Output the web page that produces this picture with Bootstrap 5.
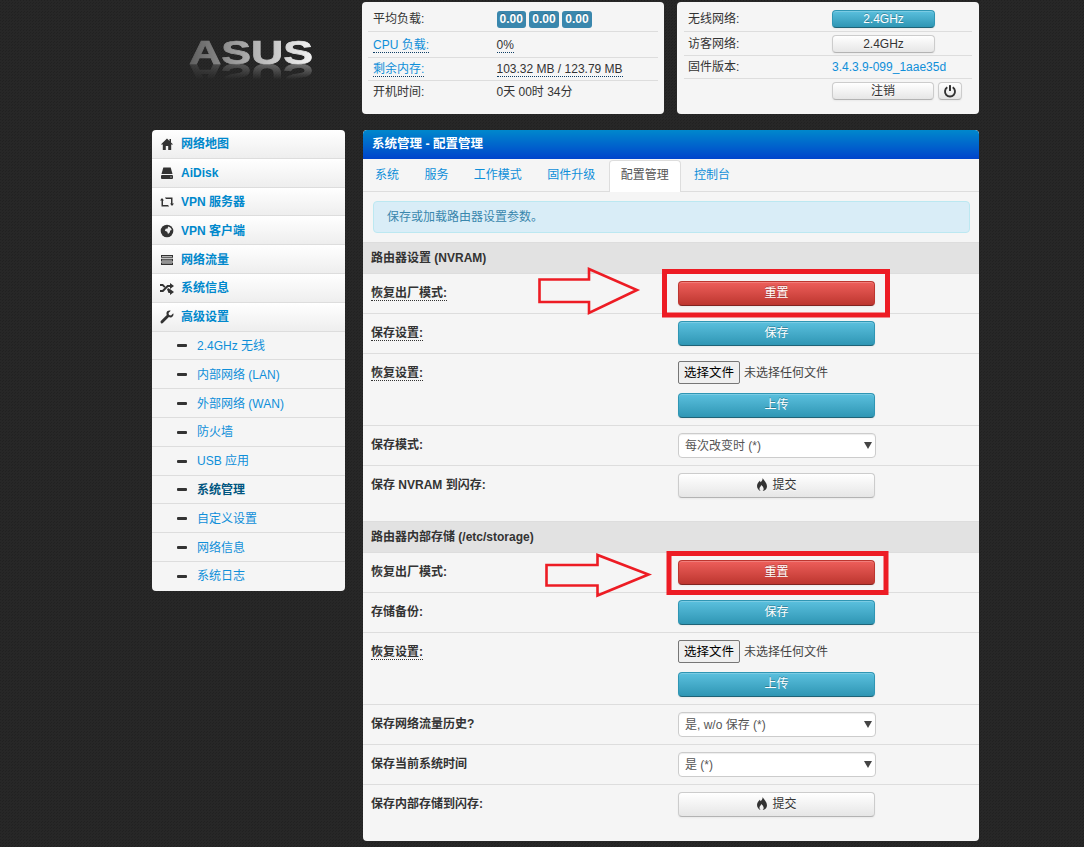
<!DOCTYPE html>
<html lang="zh">
<head>
<meta charset="utf-8">
<title>系统管理 - 配置管理</title>
<link href="https://cdn.jsdelivr.net/npm/bootstrap@5.3.0/dist/css/bootstrap.min.css" rel="stylesheet">
<style>
html,body{height:847px;overflow:hidden}
body{font:12px/18px "Liberation Sans","Noto Sans CJK SC",sans-serif;color:#333;
  background-color:#272727;
  background-image:linear-gradient(45deg,#212121 25%,transparent 25%,transparent 75%,#212121 75%);
  background-size:3px 3px}
a{color:#0f8fd9;text-decoration:none}
.ico{width:14px;height:14px;fill:#333;flex:none}
.shell{width:827px;margin:0 0 0 152px;padding-top:2px}
.brand{width:210px;height:112px;padding:38px 0 0 37px}
.brand svg{display:block;overflow:visible;-webkit-box-reflect:below 0 linear-gradient(transparent 35%,rgba(255,255,255,.4))}
.brand text{font:bold 33px "Liberation Sans",sans-serif}
.panel{background:#f5f5f5;border-radius:4px}
.stat{width:302px;height:112px;padding:5px 6px 0}
.stat-b{margin-left:13px;padding:5px 7px 0}
.srow{border-bottom:1px solid #ddd;display:flex;align-items:center;padding-left:5px}
.srow:last-child{border-bottom:0}
.stat-b .srow{padding-left:4px}
.h22{height:22px}.h23{height:23px}.h24{height:24px}.h25{height:25px}.h26{height:26px}
.btn-strip{align-items:flex-start;padding-top:3px}
.slabel{width:123.5px;flex:none}
.stat-b .slabel{width:144px}
.tip{border-bottom:1px dotted #0f3f66}
.pill{display:inline-block;background:#3a87ad;color:#fff;font-weight:700;font-size:12px;line-height:15px;padding:1px 3px;border-radius:3px;margin-right:3.5px;text-shadow:0 -1px 0 rgba(0,0,0,.25)}
.btnx{display:block;border-radius:4px;padding:0;font-size:12px;line-height:16px;color:#333;border:1px solid #ccc;border-bottom-color:#b3b3b3;background:linear-gradient(#fff,#e6e6e6);text-shadow:0 1px 1px rgba(255,255,255,.75);box-shadow:inset 0 1px 0 rgba(255,255,255,.2),0 1px 2px rgba(0,0,0,.05)}
.btnx:hover{color:#333}
.btn-go{color:#fff;background:linear-gradient(#5bc0de,#2f96b4);border-color:#2f96b4 #2f96b4 #1f6377;text-shadow:0 -1px 0 rgba(0,0,0,.25)}
.btn-stop{color:#fff;background:linear-gradient(#ee5f5b,#bd362f);border-color:#bd362f #bd362f #802420;text-shadow:0 -1px 0 rgba(0,0,0,.25)}
.btn-go:hover,.btn-stop:hover{color:#fff}
.w103{width:103px;height:18px}
.w102{width:102px;height:18px}
.w24{width:24px;height:18px}
.w197{width:197px;height:25px;line-height:23px}
.cols{margin-top:16px}
.side{width:193px;flex:none;border-radius:4px;overflow:hidden;align-self:flex-start}
.side .list-group-item{height:28.8px;border:0;border-bottom:1px solid #ddd;border-radius:0;background:linear-gradient(#fff,#eee);padding:1px 0 0 8px;display:flex;align-items:center;gap:7px;font-weight:700;color:#0088cc;font-size:12px}
.side .list-group-item:last-child{border-bottom:0;padding-top:0}
.side .sub{background:#f5f5f5;padding-left:25px;gap:10px;font-weight:400;color:#0f8fd9}
.side .sub.current{font-weight:700;color:#005580}
.dash{width:10px;height:3px;background:#333;border-radius:1px;flex:none}
.main{width:616px;margin-left:18px;height:711px;position:relative;overflow:hidden}
.mhead{height:29px;background:linear-gradient(#0088cc,#0044cc);color:#fff;font-weight:700;font-size:12.5px;line-height:29px;padding-left:9px;border-radius:4px 4px 0 0}
.tabsx{height:33px;padding-top:1px;border-bottom:1px solid #ddd;flex-wrap:nowrap}
.tabsx .nav-link{height:32px;padding:5px 11px;font-size:12px;line-height:18px;margin-right:1.4px;color:#0f8fd9;border:1px solid transparent;border-bottom:0;border-radius:4px 4px 0 0;margin-bottom:0}
.tabsx .nav-link.active{background:#fff;color:#555;border-color:#ddd;height:32px}
.notice{margin:9px 9px 9px 10px;height:32px;padding:6px 13px;border-radius:4px;background:#d9edf7;border:1px solid #bce8f1;color:#3a87ad;font-size:12px;line-height:18px}
.shead{height:32px;background:#e2e2e2;border-top:1px solid #ddd;border-bottom:1px solid #ddd;padding:6px 8px;font-weight:700}
.frow{display:flex;padding:7px 8px;border-bottom:1px solid #ddd}
.frow.plain{border-bottom:0;padding-bottom:23px}
.frow.lastp{border-bottom:0}
.flabel{width:307px;flex:none;font-weight:700;padding-top:3px}
.dot{border-bottom:1px dotted #333}
.filebtn{height:23px;width:62px;padding:0;border:1px solid #767676;border-radius:2px;background:#efefef;color:#000;font:12.5px/20px "Liberation Sans","Noto Sans CJK SC",sans-serif}
.filetxt{margin-left:4px;color:#444}
.gap9{margin-top:9px}
.pick{width:198px;height:25px;padding:2px 20px 2px 6px;font-size:12px;line-height:20px;color:#555;border:1px solid #ccc;border-radius:4px;background-color:#fff;box-shadow:inset 0 1px 1px rgba(0,0,0,.075);background-position:right 3px top 8px;background-size:8px 7px;
  background-image:url("data:image/svg+xml,%3csvg xmlns='http://www.w3.org/2000/svg' viewBox='0 0 8 7'%3e%3cpath fill='%23444' d='M0 0h8L4 7z'/%3e%3c/svg%3e")}
.mark-lay{position:absolute;left:0;top:0;width:616px;height:711px;pointer-events:none}
.fire{width:12px;height:13px;margin-right:4px;vertical-align:-2px;fill:#333}
</style>
</head>
<body>
<div class="shell">
  <div class="d-flex">
    <div class="brand">
      <svg width="124" height="24" viewBox="0 0 124 24" role="img" aria-label="ASUS">
        <defs><linearGradient id="lg" x1="0" x2="1" y1="0" y2="0"><stop offset="0" stop-color="#5e5e5e"/><stop offset=".45" stop-color="#a8a8a8"/><stop offset="1" stop-color="#f4f4f4"/></linearGradient></defs>
        <text x="0" y="24" textLength="124" lengthAdjust="spacingAndGlyphs" fill="url(#lg)" stroke="url(#lg)" stroke-width=".7">ASUS</text>
      </svg>
    </div>
    <div class="panel stat">
      <div class="srow h25"><div class="slabel">平均负载:</div><div class="d-flex"><span class="pill">0.00</span><span class="pill">0.00</span><span class="pill">0.00</span></div></div>
      <div class="srow h26"><div class="slabel"><a href="#" class="tip">CPU 负载:</a></div><div><span class="tip">0%</span></div></div>
      <div class="srow h23"><div class="slabel"><a href="#" class="tip">剩余内存:</a></div><div><span class="tip">103.32 MB / 123.79 MB</span></div></div>
      <div class="srow h22"><div class="slabel">开机时间:</div><div>0天 00时 34分</div></div>
    </div>
    <div class="panel stat stat-b">
      <div class="srow h25"><div class="slabel">无线网络:</div><a href="#" class="btn btnx btn-go w103">2.4GHz</a></div>
      <div class="srow h24"><div class="slabel">访客网络:</div><a href="#" class="btn btnx w103">2.4GHz</a></div>
      <div class="srow h23"><div class="slabel">固件版本:</div><a href="#">3.4.3.9-099_1aae35d</a></div>
      <div class="srow h25 btn-strip"><div class="slabel"></div><a href="#" class="btn btnx w102">注销</a><a href="#" class="btn btnx w24 ms-1 d-flex align-items-center justify-content-center"><svg class="ico" viewBox="0 0 14 14"><path d="M4.300 3.300a5 5 0 1 0 5.400 0" fill="none" stroke="#333" stroke-width="1.900"/><rect x="6" y="1" width="2" height="6" rx=".5"/></svg></a></div>
    </div>
  </div>
  <div class="d-flex cols">
    <div class="list-group side">
      <a href="#" class="list-group-item"><svg class="ico" viewBox="0 0 14 14"><path d="M7 1.500 .8 7.600h2V13h3V9h2.400v4h3V7.600h2L11 5.400V2H9.500v1.900z"/></svg>网络地图</a>
      <a href="#" class="list-group-item"><svg class="ico" viewBox="0 0 14 14"><path d="M3.300 1.500h7.400L12.500 8h-11z"/><path fill-rule="evenodd" d="M2 9h10a1 1 0 0 1 1 1v2a1 1 0 0 1-1 1H2a1 1 0 0 1-1-1v-2a1 1 0 0 1 1-1zm8.500 1.500v1h1v-1z"/></svg>AiDisk</a>
      <a href="#" class="list-group-item"><svg class="ico" viewBox="0 0 14 14"><path d="M0 5.500 2 3l2 2.500H3V10h5l1.200 1.500H1.500V5.500zM14 8.500 12 11l-2-2.500h1V4H6L4.800 2.500h7.700v6z"/></svg>VPN 服务器</a>
      <a href="#" class="list-group-item"><svg class="ico" viewBox="0 0 14 14"><circle cx="7" cy="7" r="6.300"/><path fill="#eee" d="M8 2.500c2 .3 3.500 1.800 3.700 3.500l-1.500.5-.5 2-1.700 1.500-.8-2.200-2.300-1 .7-2 2.100-.3z"/></svg>VPN 客户端</a>
      <a href="#" class="list-group-item"><svg class="ico" viewBox="0 0 14 14"><path d="M1 2h12v2.700H1zM1 5.700h12v2.700H1zM1 9.400h12V12H1z"/><path fill="#ddd" d="M2 3h10v.7H2zM2 6.700h10v.7H2zM2 10.400h10v.7H2z"/></svg>网络流量</a>
      <a href="#" class="list-group-item"><svg class="ico" viewBox="0 0 14 14"><path d="M0 3h3l2.500 2.500-1.300 1.300L2.300 5H0zM0 9h2.300l5-5H10V2l4 3-4 3V6H8.200l-5 5H0zM7 8.200 8.300 7l-.1.1 1.800 1.100H10v-.2l4 3-4 3v-2H8.500z"/></svg>系统信息</a>
      <a href="#" class="list-group-item"><svg class="ico" viewBox="0 0 14 14"><path d="M13.300 3.300 11 5.500 9 5l-.5-2 2.200-2.200C8.800.2 6.900 1 6.500 2.800c-.2.800 0 1.700.3 2.300L.8 11a1.500 1.500 0 0 0 2.100 2.100l6-6c.7.400 1.500.5 2.300.3 1.800-.4 2.700-2.200 2.100-4.100z"/></svg>高级设置</a>
      <a href="#" class="list-group-item sub"><span class="dash"></span>2.4GHz 无线</a>
      <a href="#" class="list-group-item sub"><span class="dash"></span>内部网络 (LAN)</a>
      <a href="#" class="list-group-item sub"><span class="dash"></span>外部网络 (WAN)</a>
      <a href="#" class="list-group-item sub"><span class="dash"></span>防火墙</a>
      <a href="#" class="list-group-item sub"><span class="dash"></span>USB 应用</a>
      <a href="#" class="list-group-item sub current"><span class="dash"></span>系统管理</a>
      <a href="#" class="list-group-item sub"><span class="dash"></span>自定义设置</a>
      <a href="#" class="list-group-item sub"><span class="dash"></span>网络信息</a>
      <a href="#" class="list-group-item sub"><span class="dash"></span>系统日志</a>
    </div>
    <div class="panel main">
      <div class="mhead">系统管理 - 配置管理</div>
      <ul class="nav nav-tabs tabsx">
        <li class="nav-item"><a class="nav-link" href="#">系统</a></li>
        <li class="nav-item"><a class="nav-link" href="#">服务</a></li>
        <li class="nav-item"><a class="nav-link" href="#">工作模式</a></li>
        <li class="nav-item"><a class="nav-link" href="#">固件升级</a></li>
        <li class="nav-item"><a class="nav-link active" href="#">配置管理</a></li>
        <li class="nav-item"><a class="nav-link" href="#">控制台</a></li>
      </ul>
      <div class="notice">保存或加载路由器设置参数。</div>

      <div class="shead">路由器设置 (NVRAM)</div>
      <div class="frow"><div class="flabel"><span class="dot">恢复出厂模式:</span></div><a href="#" class="btn btnx btn-stop w197">重置</a></div>
      <div class="frow"><div class="flabel"><span class="dot">保存设置:</span></div><a href="#" class="btn btnx btn-go w197">保存</a></div>
      <div class="frow"><div class="flabel"><span class="dot">恢复设置:</span></div><div><div><button type="button" class="filebtn">选择文件</button><span class="filetxt">未选择任何文件</span></div><a href="#" class="btn btnx btn-go w197 gap9">上传</a></div></div>
      <div class="frow"><div class="flabel">保存模式:</div><select class="form-select pick"><option>每次改变时 (*)</option></select></div>
      <div class="frow plain"><div class="flabel">保存 NVRAM 到闪存:</div><a href="#" class="btn btnx w197"><svg class="fire" viewBox="0 0 12 13"><path d="M6.500 0c.5 2-1 3-1.800 4.300C4.200 3.800 4 3.200 4.100 2.500 2.400 4 1 5.800 1 8c0 2.700 1.900 4.600 3.800 5-1-.8-1.600-1.800-1.200-3 .3-1 1.300-1.600 1.500-3 1.200.7 2.900 2.500 2.500 4.500-.2.800-.6 1.200-1 1.500C9.300 12.600 11 10.700 11 8.200 11 5 8.300 3 6.500 0z"/></svg>提交</a></div>

      <div class="shead">路由器内部存储 (/etc/storage)</div>
      <div class="frow"><div class="flabel">恢复出厂模式:</div><a href="#" class="btn btnx btn-stop w197">重置</a></div>
      <div class="frow"><div class="flabel">存储备份:</div><a href="#" class="btn btnx btn-go w197">保存</a></div>
      <div class="frow"><div class="flabel"><span class="dot">恢复设置:</span></div><div><div><button type="button" class="filebtn">选择文件</button><span class="filetxt">未选择任何文件</span></div><a href="#" class="btn btnx btn-go w197 gap9">上传</a></div></div>
      <div class="frow"><div class="flabel">保存网络流量历史?</div><select class="form-select pick"><option>是, w/o 保存 (*)</option></select></div>
      <div class="frow"><div class="flabel">保存当前系统时间</div><select class="form-select pick"><option>是 (*)</option></select></div>
      <div class="frow lastp"><div class="flabel">保存内部存储到闪存:</div><a href="#" class="btn btnx w197"><svg class="fire" viewBox="0 0 12 13"><path d="M6.500 0c.5 2-1 3-1.800 4.300C4.200 3.800 4 3.200 4.100 2.500 2.400 4 1 5.800 1 8c0 2.700 1.900 4.600 3.800 5-1-.8-1.600-1.800-1.200-3 .3-1 1.300-1.600 1.500-3 1.200.7 2.900 2.500 2.500 4.500-.2.800-.6 1.200-1 1.500C9.300 12.600 11 10.700 11 8.200 11 5 8.300 3 6.500 0z"/></svg>提交</a></div>

      <svg class="mark-lay" viewBox="363 130 616 711" fill="none" stroke="#ed1c24">
        <rect x="664.500" y="271.500" width="223" height="43.500" stroke-width="5"/>
        <path d="M539.500 279.500H589V269l48 21-48 23v-11H539.500z" stroke-width="2.600"/>
        <rect x="669" y="553.500" width="217" height="39" stroke-width="5"/>
        <path d="M546.500 565H597.500v-10l51 19.500-51 21v-10H546.500z" stroke-width="2.600"/>
      </svg>
    </div>
  </div>
</div>
</body>
</html>
